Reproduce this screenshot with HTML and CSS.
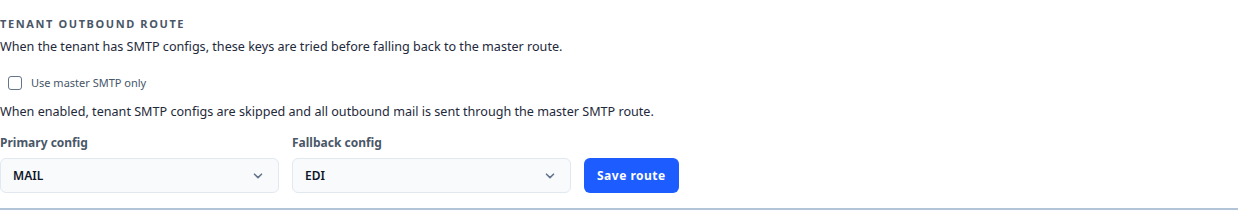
FILE: index.html
```html
<!DOCTYPE html>
<html lang="en">
<head>
    <meta charset="UTF-8">
    <title>Tenant outbound route</title>
    <link rel="stylesheet" href="styles.css">
</head>
<body>
    <section class="route">
        <h3 class="route-title">Tenant outbound route</h3>
        <p class="hint">When the tenant has SMTP configs, these keys are tried before falling back to the master route.</p>

        <label class="check">
            <input type="checkbox" id="masterOnly">
            <span>Use master SMTP only</span>
        </label>
        <p class="hint">When enabled, tenant SMTP configs are skipped and all outbound mail is sent through the master SMTP route.</p>

        <div class="route-row">
            <div class="field">
                <label for="primary">Primary config</label>
                <div class="select-wrap">
                    <select id="primary">
                        <option>MAIL</option>
                        <option>EDI</option>
                    </select>
                    <svg class="chevron" width="10" height="6" viewBox="0 0 10 6"><path d="M1.5 1.2 5 4.6 8.5 1.2" fill="none" stroke="#64748b" stroke-width="1.6" stroke-linecap="round" stroke-linejoin="round"/></svg>
                </div>
            </div>
            <div class="field">
                <label for="fallback">Fallback config</label>
                <div class="select-wrap">
                    <select id="fallback">
                        <option>EDI</option>
                        <option>MAIL</option>
                    </select>
                    <svg class="chevron" width="10" height="6" viewBox="0 0 10 6"><path d="M1.5 1.2 5 4.6 8.5 1.2" fill="none" stroke="#64748b" stroke-width="1.6" stroke-linecap="round" stroke-linejoin="round"/></svg>
                </div>
            </div>
            <button class="save">Save route</button>
        </div>
    </section>
</body>
</html>
```

FILE: styles.css
```css
body {
    margin: 0;
    font-family: "Noto Sans", "Liberation Sans", sans-serif;
    color: #1e293b;
    background: #fff;
}
.route {
    padding: 16px 0 15px;
    border-bottom: 2px solid #b3c4d8;
}
.route-title {
    margin: 0;
    font-size: 11px;
    font-weight: 700;
    letter-spacing: 1.6px;
    text-transform: uppercase;
    color: #4a5768;
    line-height: 16px;
}
.hint {
    margin: 0;
    font-size: 12.6px;
    line-height: 18px;
    color: #1e293b;
}
.route-title + .hint {
    margin-top: 6px;
}
.check {
    display: flex;
    align-items: center;
    gap: 9px;
    margin: 19px 0 13px 8px;
    font-size: 11px;
    color: #475569;
}
.check input {
    appearance: none;
    width: 14px;
    height: 14px;
    margin: 0;
    border: 1.5px solid #64748b;
    border-radius: 3px;
    background: #fff;
}
.route-row {
    display: flex;
    align-items: flex-end;
    gap: 13px;
    margin-top: 14px;
}
.field {
    width: 279px;
}
.field label {
    display: block;
    font-size: 12px;
    font-weight: 700;
    color: #4a5768;
    line-height: 16px;
    margin-bottom: 7px;
}
.select-wrap {
    position: relative;
}
.select-wrap select {
    appearance: none;
    width: 100%;
    height: 35px;
    padding: 0 12px;
    border: 1px solid #e2e8f0;
    border-radius: 6px;
    background: #f8fafc;
    font-family: inherit;
    font-size: 12px;
    font-weight: 600;
    color: #0f172a;
}
.chevron {
    position: absolute;
    right: 16px;
    top: 15px;
    pointer-events: none;
}
.save {
    height: 35px;
    padding: 0 13px;
    border: none;
    border-radius: 6px;
    background: #1d5cff;
    color: #fff;
    font-family: inherit;
    font-size: 12px;
    font-weight: 700;
    letter-spacing: 0.5px;
    cursor: pointer;
}
```
